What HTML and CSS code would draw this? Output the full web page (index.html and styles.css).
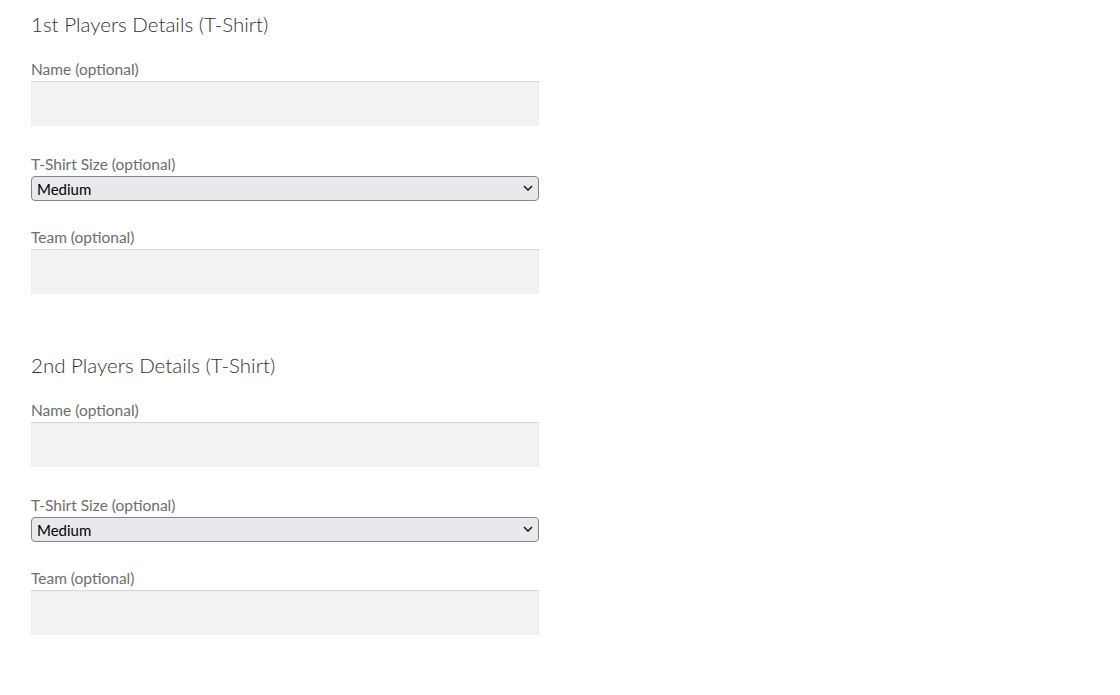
FILE: index.html
```html
<!DOCTYPE html>
<html lang="en">
<head>
<meta charset="utf-8">
<title>Players Details</title>
<link rel="stylesheet" href="styles.css">
</head>
<body>
<div class="page">
  <section class="player">
    <h3 class="player-title">1st Players Details (T-Shirt)</h3>
    <div class="field">
      <label class="field-label" for="p1-name">Name (optional)</label>
      <input class="text-input" id="p1-name" type="text">
    </div>
    <div class="field field-select">
      <label class="field-label" for="p1-size">T-Shirt Size (optional)</label>
      <div class="select-wrap">
        <select class="select-input" id="p1-size">
          <option>Small</option>
          <option selected>Medium</option>
          <option>Large</option>
          <option>X-Large</option>
        </select>
        <svg class="select-arrow" width="10" height="6" viewBox="0 0 10 6"><path d="M1 1 L5 5 L9 1" fill="none" stroke="#1a1a1a" stroke-width="1.6"/></svg>
      </div>
    </div>
    <div class="field">
      <label class="field-label" for="p1-team">Team (optional)</label>
      <input class="text-input" id="p1-team" type="text">
    </div>
  </section>
  <section class="player">
    <h3 class="player-title">2nd Players Details (T-Shirt)</h3>
    <div class="field">
      <label class="field-label" for="p2-name">Name (optional)</label>
      <input class="text-input" id="p2-name" type="text">
    </div>
    <div class="field field-select">
      <label class="field-label" for="p2-size">T-Shirt Size (optional)</label>
      <div class="select-wrap">
        <select class="select-input" id="p2-size">
          <option>Small</option>
          <option selected>Medium</option>
          <option>Large</option>
          <option>X-Large</option>
        </select>
        <svg class="select-arrow" width="10" height="6" viewBox="0 0 10 6"><path d="M1 1 L5 5 L9 1" fill="none" stroke="#1a1a1a" stroke-width="1.6"/></svg>
      </div>
    </div>
    <div class="field">
      <label class="field-label" for="p2-team">Team (optional)</label>
      <input class="text-input" id="p2-team" type="text">
    </div>
  </section>
</div>
</body>
</html>
```

FILE: styles.css
```css
html, body {
  margin: 0;
  padding: 0;
  background: #ffffff;
}

body {
  font-family: "Lato", "Open Sans", "Liberation Sans", sans-serif;
  color: #6d6d6d;
}

.page {
  width: 508px;
  padding: 9px 0 0 31px;
  display: flex;
  flex-direction: column;
  gap: 56px;
}

.player {
  display: flex;
  flex-direction: column;
  gap: 28px;
}

.player-title {
  margin: 0 0 -8px 0;
  font-size: 20.5px;
  line-height: 30px;
  font-weight: 300;
  color: #333333;
}

.field {
  display: flex;
  flex-direction: column;
  gap: 2px;
}

.field-select {
  margin-bottom: -2px;
}

.field-label {
  display: block;
  font-size: 15.5px;
  line-height: 20px;
  color: #6d6d6d;
}

.text-input {
  box-sizing: border-box;
  width: 508px;
  height: 45px;
  margin: 0;
  padding: 0 10px;
  border: 0;
  background: #f2f2f2;
  box-shadow: inset 0 1px 1px rgba(0, 0, 0, 0.125);
  font-family: inherit;
  font-size: 15px;
  outline: none;
}

.select-wrap {
  position: relative;
  width: 508px;
  height: 25px;
}

.select-input {
  -webkit-appearance: none;
  appearance: none;
  box-sizing: border-box;
  display: block;
  width: 508px;
  height: 25px;
  margin: 0;
  padding: 0 24px 0 5px;
  border: 1px solid #858585;
  border-radius: 4px;
  background-color: #e9e8ed;
  font-family: inherit;
  font-size: 15px;
  color: #000000;
}

.select-arrow {
  position: absolute;
  right: 6px;
  top: 9px;
  pointer-events: none;
}
```
